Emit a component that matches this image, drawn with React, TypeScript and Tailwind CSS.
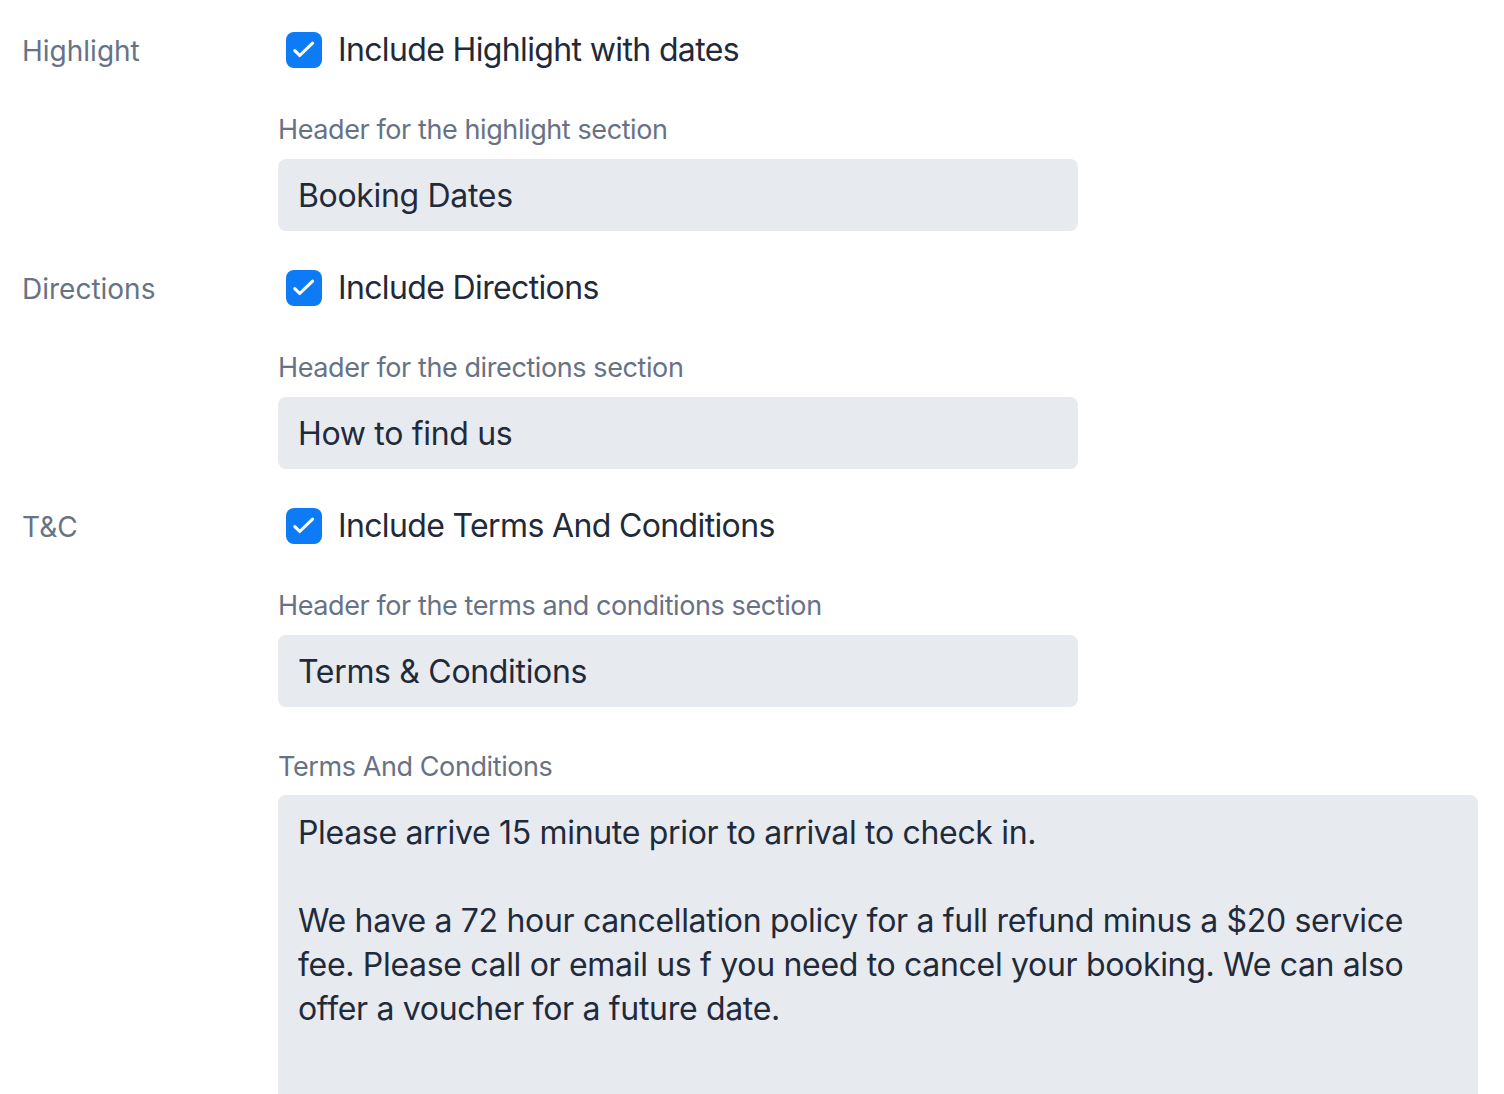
import React from "react";

type Section = {
  label: string;
  checkboxLabel: string;
  headerLabel: string;
  headerValue: string;
};

const sections: Section[] = [
  {
    label: "Highlight",
    checkboxLabel: "Include Highlight with dates",
    headerLabel: "Header for the highlight section",
    headerValue: "Booking Dates",
  },
  {
    label: "Directions",
    checkboxLabel: "Include Directions",
    headerLabel: "Header for the directions section",
    headerValue: "How to find us",
  },
  {
    label: "T&C",
    checkboxLabel: "Include Terms And Conditions",
    headerLabel: "Header for the terms and conditions section",
    headerValue: "Terms & Conditions",
  },
];

const termsText =
  "Please arrive 15 minute prior to arrival to check in.\n\nWe have a 72 hour cancellation policy for a full refund minus a $20 service fee. Please call or email us f you need to cancel your booking. We can also offer a voucher for a future date.";

const fieldClass =
  "w-full rounded-lg bg-[#e7eaef] px-5 text-[32px] tracking-[-0.01em] text-[#1f2a3b] outline-none";

const CheckIcon = () => (
  <svg viewBox="0 0 36 36" className="h-9 w-9" fill="none">
    <path
      d="M8.8 18.6l4.9 4.9L26.6 11.2"
      stroke="white"
      strokeWidth="3.1"
      strokeLinecap="round"
      strokeLinejoin="round"
    />
  </svg>
);

const SectionBlock = ({ section }: { section: Section }) => {
  const [checked, setChecked] = React.useState(true);
  const [value, setValue] = React.useState(section.headerValue);

  return (
    <div className="flex">
      <div className="w-[278px] shrink-0 pl-[22px] pt-[35px] text-[28px] leading-8 text-[#687285]">
        {section.label}
      </div>
      <div className="flex-1">
        <label className="flex h-[99px] cursor-pointer items-center gap-4 pl-2">
          <button
            type="button"
            onClick={() => setChecked(!checked)}
            className={`flex h-9 w-9 items-center justify-center rounded-lg ${
              checked ? "bg-[#0d7bf5]" : "border-2 border-gray-300 bg-white"
            }`}
          >
            {checked && <CheckIcon />}
          </button>
          <span className="text-[32px] tracking-[-0.02em] text-[#1f2a3b]">
            {section.checkboxLabel}
          </span>
        </label>
        <div className="pb-[13px] pt-[15px] text-[27px] leading-8 tracking-[-0.015em] text-[#687285]">
          {section.headerLabel}
        </div>
        <input
          value={value}
          onChange={(e) => setValue(e.target.value)}
          className={`${fieldClass} h-[72px] max-w-[800px]`}
        />
      </div>
    </div>
  );
};

export default function App() {
  const [terms, setTerms] = React.useState(termsText);

  return (
    <div
      className="min-h-screen bg-white"
      style={{ fontFamily: "Inter, 'Noto Sans', sans-serif" }}
    >
      <div className="flex flex-col gap-[7px] pr-[26px]">
        {sections.map((s) => (
          <SectionBlock key={s.label} section={s} />
        ))}
      </div>
      <div className="flex pr-[26px]">
        <div className="w-[278px] shrink-0" />
        <div className="flex-1">
          <div className="pb-[12px] pt-[44px] text-[27px] leading-8 tracking-[-0.015em] text-[#687285]">
            Terms And Conditions
          </div>
          <textarea
            value={terms}
            onChange={(e) => setTerms(e.target.value)}
            className={`${fieldClass} block h-[360px] resize-none py-[16px] pr-[40px] leading-[44px]`}
          />
        </div>
      </div>
    </div>
  );
}
